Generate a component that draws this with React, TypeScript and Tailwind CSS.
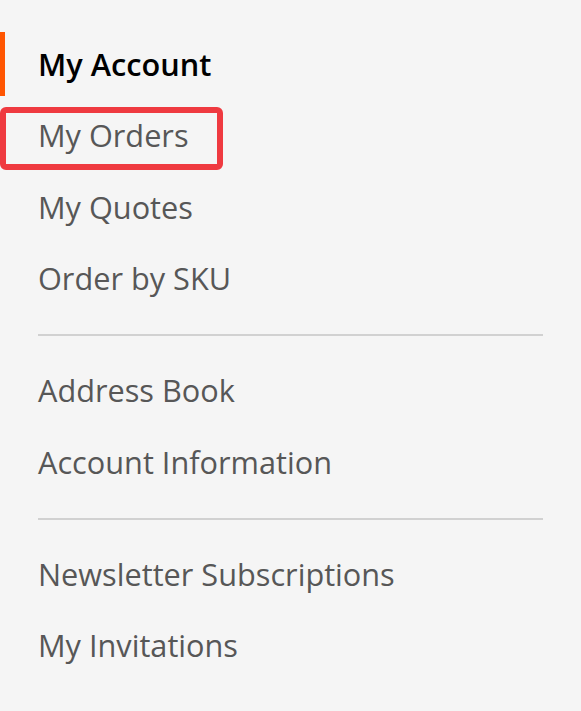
import React from 'react';

type NavItem = { label: string; current?: boolean; highlighted?: boolean };

const groups: NavItem[][] = [
  [
    { label: 'My Account', current: true },
    { label: 'My Orders', highlighted: true },
    { label: 'My Quotes' },
    { label: 'Order by SKU' },
  ],
  [{ label: 'Address Book' }, { label: 'Account Information' }],
  [{ label: 'Newsletter Subscriptions' }, { label: 'My Invitations' }],
];

function Item({ item }: { item: NavItem }) {
  if (item.current) {
    return (
      <li className="flex h-16 items-center border-l-[5px] border-[#ff5501] pl-[33px] font-semibold text-black">
        {item.label}
      </li>
    );
  }
  return (
    <li className="relative flex h-16 items-center pl-[38px] text-[#575757]">
      {item.highlighted && (
        <span className="pointer-events-none absolute left-0 top-[3.5px] h-[63px] w-[223px] rounded-[6px] border-[6px] border-[#ef3a40]" />
      )}
      {item.label}
    </li>
  );
}

export default function App() {
  return (
    <div
      className="min-h-screen w-full bg-[#f5f5f5] pt-8 text-[30.7px] leading-none"
      style={{ fontFamily: '"Open Sans", "Noto Sans", sans-serif' }}
    >
      <nav>
        {groups.map((group, gi) => (
          <div key={gi}>
            {gi > 0 && (
              <div className="px-[38px] pb-[22.5px] pt-[16px]">
                <div className="h-[2px] bg-[#d1d1d1]" />
              </div>
            )}
            <ul className="flex flex-col gap-[7.5px]">
              {group.map((item) => (
                <Item key={item.label} item={item} />
              ))}
            </ul>
            {gi < groups.length - 1 && <div className="h-[7.5px]" />}
          </div>
        ))}
      </nav>
    </div>
  );
}
